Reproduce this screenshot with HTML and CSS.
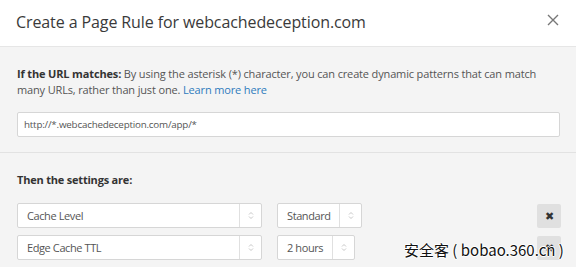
FILE: index.html
```html
<!DOCTYPE html>
<html lang="en">
<head>
    <meta charset="UTF-8">
    <title>Create a Page Rule</title>
    <link rel="stylesheet" href="styles.css">
</head>
<body>
    <div class="modal">
        <!-- Header -->
        <div class="modal-header">
            <h1 class="modal-title">Create a Page Rule for webcachedeception.com</h1>
            <span class="close-btn">
                <svg width="12" height="12" viewBox="0 0 12 12">
                    <path d="M1 1 L11 11 M11 1 L1 11" stroke="#777" stroke-width="1.4" fill="none"/>
                </svg>
            </span>
        </div>

        <!-- URL -->
        <div class="section section-url">
            <p class="intro"><b>If the URL matches:</b> By using the asterisk (*) character, you can create dynamic patterns that can match many URLs, rather than just one. <a href="#">Learn more here</a></p>
            <div class="text-input">http://*.webcachedeception.com/app/*</div>
        </div>

        <!-- Settings -->
        <div class="section section-settings">
            <p class="label"><b>Then the settings are:</b></p>

            <div class="setting-row">
                <div class="select select-main">
                    <span class="select-value">Cache Level</span>
                    <span class="select-arrows">
                        <svg width="6" height="9" viewBox="0 0 6 9"><path d="M1 3.5 L3 1.5 L5 3.5 M1 5.5 L3 7.5 L5 5.5" stroke="#c8c8c8" stroke-width="1" fill="none"/></svg>
                    </span>
                </div>
                <div class="select select-standard">
                    <span class="select-value">Standard</span>
                    <span class="select-arrows">
                        <svg width="6" height="9" viewBox="0 0 6 9"><path d="M1 3.5 L3 1.5 L5 3.5 M1 5.5 L3 7.5 L5 5.5" stroke="#c8c8c8" stroke-width="1" fill="none"/></svg>
                    </span>
                </div>
                <span class="remove-btn">&#10006;</span>
            </div>

            <div class="setting-row">
                <div class="select select-main">
                    <span class="select-value">Edge Cache TTL</span>
                    <span class="select-arrows">
                        <svg width="6" height="9" viewBox="0 0 6 9"><path d="M1 3.5 L3 1.5 L5 3.5 M1 5.5 L3 7.5 L5 5.5" stroke="#c8c8c8" stroke-width="1" fill="none"/></svg>
                    </span>
                </div>
                <div class="select select-hours">
                    <span class="select-value">2 hours</span>
                    <span class="select-arrows">
                        <svg width="6" height="9" viewBox="0 0 6 9"><path d="M1 3.5 L3 1.5 L5 3.5 M1 5.5 L3 7.5 L5 5.5" stroke="#c8c8c8" stroke-width="1" fill="none"/></svg>
                    </span>
                </div>
                <span class="remove-btn">&#10006;</span>
            </div>
        </div>
    </div>

    <div class="watermark">安全客 ( bobao.360.cn )</div>
</body>
</html>
```

FILE: styles.css
```css
* {
    margin: 0;
    padding: 0;
    box-sizing: border-box;
}

body {
    width: 576px;
    height: 267px;
    overflow: hidden;
    background-color: #fff;
    font-family: 'Open Sans', sans-serif;
    position: relative;
}

.modal {
    display: flex;
    flex-direction: column;
}

/* Header */
.modal-header {
    display: flex;
    align-items: center;
    justify-content: space-between;
    height: 47px;
    padding: 0 17px 0 16px;
    border-bottom: 1px solid #e6e6e6;
    background-color: #fff;
}

.modal-title {
    font-size: 16px;
    font-weight: 400;
    letter-spacing: -0.1px;
    color: #3a3a3a;
    margin-top: -2px;
}

.close-btn {
    display: flex;
    margin-top: -6px;
}

.section {
    background-color: #f4f4f4;
    padding: 0 16px 0 17px;
}

.section-url {
    padding-top: 19px;
    height: 106px;
    border-bottom: 1px solid #e2e2e2;
}

.intro {
    max-width: 530px;
    font-size: 11px;
    line-height: 16px;
    letter-spacing: -0.15px;
    color: #555;
}

.intro b,
.label b {
    color: #333;
    font-weight: 700;
}

.intro a {
    color: #2f7bbd;
    text-decoration: none;
}

.text-input {
    margin-top: 14px;
    height: 25px;
    background-color: #fff;
    border: 1px solid #d6d6d6;
    border-radius: 2px;
    font-size: 9.8px;
    letter-spacing: -0.2px;
    color: #555;
    padding: 0 6px;
    display: flex;
    align-items: center;
}

.section-settings {
    padding-top: 19px;
    height: 114px;
}

.label {
    font-size: 11px;
    line-height: 16px;
    letter-spacing: -0.2px;
}

.setting-row {
    display: flex;
    align-items: center;
    margin-top: 7px;
}

.label + .setting-row {
    margin-top: 15px;
}

.select {
    display: flex;
    height: 25px;
    background-color: #fff;
    border: 1px solid #d6d6d6;
    border-radius: 2px;
    font-size: 11px;
    letter-spacing: -0.4px;
    color: #555;
}

.select-value {
    flex-grow: 1;
    display: flex;
    align-items: center;
    padding-left: 9px;
}

.select-arrows {
    width: 22px;
    border-left: 1px solid #e0e0e0;
    display: flex;
    align-items: center;
    justify-content: center;
}

.select-main {
    width: 245px;
}

.select-standard {
    width: 85px;
    margin-left: 15px;
}

.select-hours {
    width: 78px;
    margin-left: 15px;
}

.remove-btn {
    margin-left: auto;
    margin-right: -1px;
    width: 24px;
    height: 24px;
    background-color: #e0e0e0;
    border-radius: 2px;
    display: flex;
    align-items: center;
    justify-content: center;
    font-size: 11px;
    color: #333;
}

/* Marca d'agua */
.watermark {
    position: absolute;
    left: 404px;
    top: 239px;
    font-family: 'Noto Sans CJK SC', sans-serif;
    font-size: 15px;
    color: #111;
    text-shadow: 1px 0 #fff, -1px 0 #fff, 0 1px #fff, 0 -1px #fff;
}
```
